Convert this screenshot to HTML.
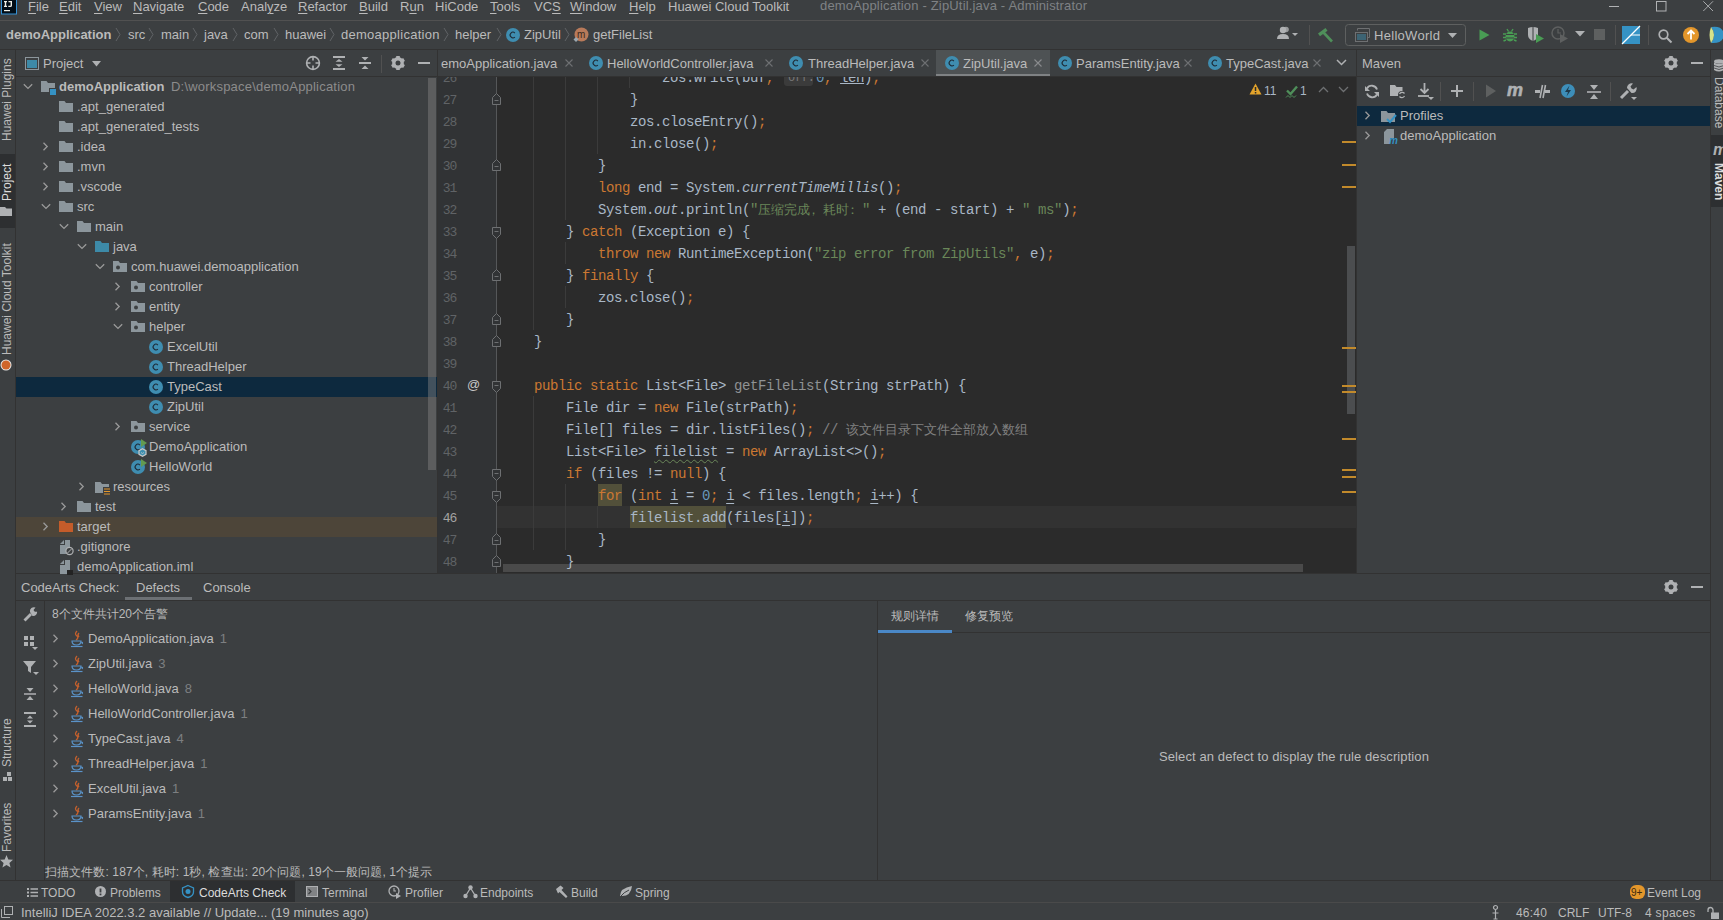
<!DOCTYPE html>
<html><head><meta charset="utf-8">
<style>
*{margin:0;padding:0;box-sizing:border-box}
html,body{width:1723px;height:920px;overflow:hidden;background:#3c3f41}
body{position:relative;font-family:"Liberation Sans",sans-serif;font-size:13px;color:#bbbbbb}
.a{position:absolute}
.t{position:absolute;white-space:pre;line-height:20px;font-size:13px;color:#bbbbbb;font-family:"Liberation Sans",sans-serif}
.code{position:absolute;white-space:pre;font-family:"Liberation Mono",monospace;font-size:14px;letter-spacing:-0.4px;line-height:22px;color:#a9b7c6}
.code i{font-style:italic}
.cj{display:inline-block;width:13px;font-size:13px;letter-spacing:0;font-family:"Liberation Sans",sans-serif;vertical-align:top}
.k{color:#cc7832}
.s{color:#6a8759}
.n{color:#6897bb}
.c{color:#808080}
.ln{position:absolute;left:436px;width:20px;text-align:right;font-family:"Liberation Mono",monospace;font-size:13px;letter-spacing:-1.2px;line-height:22px;color:#606366}
svg{position:absolute;overflow:visible}
u{text-decoration:underline;text-underline-offset:2px}
</style></head>
<body>
<div class="a" style="left:0px;top:0px;width:1723px;height:920px;background:#3c3f41;"></div>
<div class="a" style="left:0px;top:20px;width:1723px;height:1px;background:#515151;"></div>
<div class="a" style="left:0px;top:49px;width:1723px;height:1px;background:#323232;"></div>
<div class="a" style="left:15px;top:50px;width:1px;height:831px;background:#323232;"></div>
<div class="a" style="left:0px;top:154px;width:15px;height:74px;background:#2d2f31;"></div>
<div class="a" style="left:16px;top:76px;width:421px;height:1px;background:#323232;"></div>
<div class="a" style="left:437px;top:50px;width:1px;height:523px;background:#323232;"></div>
<div class="a" style="left:438px;top:76px;width:918px;height:1px;background:#323232;"></div>
<div class="a" style="left:438px;top:77px;width:59px;height:496px;background:#313335;"></div>
<div class="a" style="left:497px;top:77px;width:859px;height:496px;background:#2b2b2b;"></div>
<div class="a" style="left:1356px;top:50px;width:1px;height:523px;background:#323232;"></div>
<div class="a" style="left:1357px;top:76px;width:353px;height:1px;background:#323232;"></div>
<div class="a" style="left:1710px;top:50px;width:1px;height:831px;background:#323232;"></div>
<div class="a" style="left:1711px;top:135px;width:12px;height:72px;background:#2d2f31;"></div>
<div class="a" style="left:16px;top:573px;width:1694px;height:1px;background:#323232;"></div>
<div class="a" style="left:16px;top:600px;width:1694px;height:1px;background:#323232;"></div>
<div class="a" style="left:44px;top:601px;width:1px;height:279px;background:#323232;"></div>
<div class="a" style="left:877px;top:601px;width:1px;height:279px;background:#323232;"></div>
<div class="a" style="left:878px;top:632px;width:832px;height:1px;background:#323232;"></div>
<div class="a" style="left:0px;top:880px;width:1723px;height:1px;background:#323232;"></div>
<div class="a" style="left:0px;top:902px;width:1723px;height:1px;background:#4a4a4a;"></div>
<svg style="left:0px;top:0px" width="18" height="15" viewBox="0 0 18 15"><rect x="1.5" y="-1" width="15" height="15" fill="#020d16" stroke="#3592d6" stroke-width="1"/><path d="M4 1 H7 V2.2 H6.2 V5.8 H7 V7 H4 V5.8 H4.8 V2.2 H4z" fill="#f0f0e8"/><path d="M8.5 1 H12 V5.5 Q12 7 10.2 7 H8.3 V5.8 H10 Q10.6 5.8 10.6 5.2 V2.2 H8.5z" fill="#f0f0e8"/><rect x="4" y="10" width="6" height="1.2" fill="#f0f0e8"/></svg>
<div class="t" style="left:28px;top:-3px;font-size:13px;line-height:20px;color:#bbbbbb;font-weight:normal;"><u>F</u>ile</div>
<div class="t" style="left:59px;top:-3px;font-size:13px;line-height:20px;color:#bbbbbb;font-weight:normal;"><u>E</u>dit</div>
<div class="t" style="left:94px;top:-3px;font-size:13px;line-height:20px;color:#bbbbbb;font-weight:normal;"><u>V</u>iew</div>
<div class="t" style="left:133px;top:-3px;font-size:13px;line-height:20px;color:#bbbbbb;font-weight:normal;"><u>N</u>avigate</div>
<div class="t" style="left:198px;top:-3px;font-size:13px;line-height:20px;color:#bbbbbb;font-weight:normal;"><u>C</u>ode</div>
<div class="t" style="left:241px;top:-3px;font-size:13px;line-height:20px;color:#bbbbbb;font-weight:normal;">Anal<u>y</u>ze</div>
<div class="t" style="left:298px;top:-3px;font-size:13px;line-height:20px;color:#bbbbbb;font-weight:normal;"><u>R</u>efactor</div>
<div class="t" style="left:359px;top:-3px;font-size:13px;line-height:20px;color:#bbbbbb;font-weight:normal;"><u>B</u>uild</div>
<div class="t" style="left:400px;top:-3px;font-size:13px;line-height:20px;color:#bbbbbb;font-weight:normal;">R<u>u</u>n</div>
<div class="t" style="left:435px;top:-3px;font-size:13px;line-height:20px;color:#bbbbbb;font-weight:normal;">HiCode</div>
<div class="t" style="left:490px;top:-3px;font-size:13px;line-height:20px;color:#bbbbbb;font-weight:normal;"><u>T</u>ools</div>
<div class="t" style="left:534px;top:-3px;font-size:13px;line-height:20px;color:#bbbbbb;font-weight:normal;">VC<u>S</u></div>
<div class="t" style="left:570px;top:-3px;font-size:13px;line-height:20px;color:#bbbbbb;font-weight:normal;"><u>W</u>indow</div>
<div class="t" style="left:629px;top:-3px;font-size:13px;line-height:20px;color:#bbbbbb;font-weight:normal;"><u>H</u>elp</div>
<div class="t" style="left:668px;top:-3px;font-size:13px;line-height:20px;color:#bbbbbb;font-weight:normal;">Huawei Cloud Toolkit</div>
<div class="t" style="left:820px;top:-4px;font-size:13px;line-height:20px;color:#7f8285;font-weight:normal;letter-spacing:0.17px">demoApplication - ZipUtil.java - Administrator</div>
<div class="a" style="left:1609px;top:6px;width:10px;height:1px;background:#b0b2b4;"></div>
<svg style="left:1656px;top:1px" width="11" height="11" viewBox="0 0 11 11"><rect x="0.5" y="0.5" width="9.5" height="9.5" fill="none" stroke="#b0b2b4" stroke-width="1"/></svg>
<svg style="left:1703px;top:1px" width="11" height="11" viewBox="0 0 11 11"><path d="M0.3 0.3 L10 10 M10 0.3 L0.3 10" stroke="#a8aaac" stroke-width="1"/></svg>
<div class="t" style="left:6px;top:25px;font-size:13px;line-height:20px;color:#bbbbbb;font-weight:bold;">demoApplication</div>
<svg style="left:115px;top:27px" width="7" height="15" viewBox="0 0 7 15"><path d="M1 1 L5 7.5 L1 14" stroke="#606366" stroke-width="1" fill="none"/></svg>
<svg style="left:148px;top:27px" width="7" height="15" viewBox="0 0 7 15"><path d="M1 1 L5 7.5 L1 14" stroke="#606366" stroke-width="1" fill="none"/></svg>
<svg style="left:192px;top:27px" width="7" height="15" viewBox="0 0 7 15"><path d="M1 1 L5 7.5 L1 14" stroke="#606366" stroke-width="1" fill="none"/></svg>
<svg style="left:232px;top:27px" width="7" height="15" viewBox="0 0 7 15"><path d="M1 1 L5 7.5 L1 14" stroke="#606366" stroke-width="1" fill="none"/></svg>
<svg style="left:273px;top:27px" width="7" height="15" viewBox="0 0 7 15"><path d="M1 1 L5 7.5 L1 14" stroke="#606366" stroke-width="1" fill="none"/></svg>
<svg style="left:329px;top:27px" width="7" height="15" viewBox="0 0 7 15"><path d="M1 1 L5 7.5 L1 14" stroke="#606366" stroke-width="1" fill="none"/></svg>
<svg style="left:443px;top:27px" width="7" height="15" viewBox="0 0 7 15"><path d="M1 1 L5 7.5 L1 14" stroke="#606366" stroke-width="1" fill="none"/></svg>
<svg style="left:496px;top:27px" width="7" height="15" viewBox="0 0 7 15"><path d="M1 1 L5 7.5 L1 14" stroke="#606366" stroke-width="1" fill="none"/></svg>
<svg style="left:564px;top:27px" width="7" height="15" viewBox="0 0 7 15"><path d="M1 1 L5 7.5 L1 14" stroke="#606366" stroke-width="1" fill="none"/></svg>
<div class="t" style="left:128px;top:25px;font-size:13px;line-height:20px;color:#bbbbbb;font-weight:normal;">src</div>
<div class="t" style="left:161px;top:25px;font-size:13px;line-height:20px;color:#bbbbbb;font-weight:normal;">main</div>
<div class="t" style="left:204px;top:25px;font-size:13px;line-height:20px;color:#bbbbbb;font-weight:normal;">java</div>
<div class="t" style="left:244px;top:25px;font-size:13px;line-height:20px;color:#bbbbbb;font-weight:normal;">com</div>
<div class="t" style="left:285px;top:25px;font-size:13px;line-height:20px;color:#bbbbbb;font-weight:normal;">huawei</div>
<div class="t" style="left:341px;top:25px;font-size:13px;line-height:20px;color:#bbbbbb;font-weight:normal;letter-spacing:0.27px">demoapplication</div>
<div class="t" style="left:455px;top:25px;font-size:13px;line-height:20px;color:#bbbbbb;font-weight:normal;">helper</div>
<svg style="left:505px;top:26.5px" width="16" height="16" viewBox="0 0 16 16"><circle cx="8" cy="8" r="7" fill="#3f8db0"/><path d="M9.9 6.0 A2.8 2.8 0 1 0 9.9 10.0" stroke="#1d2a36" stroke-width="1.05" fill="none"/></svg>
<div class="t" style="left:524px;top:25px;font-size:13px;line-height:20px;color:#bbbbbb;font-weight:normal;">ZipUtil</div>
<svg style="left:574px;top:27px" width="15" height="15" viewBox="0 0 15 15"><circle cx="7.5" cy="7.5" r="7" fill="#b87a5a"/><text x="3" y="11" font-family="Liberation Sans" font-size="10" fill="#3a2a20">m</text><path d="M2 10 l2.5 2.5 l-2.5 2.5 l-2.5 -2.5z" fill="#9aa7b0"/></svg>
<div class="t" style="left:593px;top:25px;font-size:13px;line-height:20px;color:#bbbbbb;font-weight:normal;">getFileList</div>
<svg style="left:1276px;top:26px" width="22" height="16" viewBox="0 0 22 16"><circle cx="7" cy="4" r="3.2" fill="#afb1b3"/><path d="M1 13 Q1 8 7 8 Q13 8 13 13z" fill="#afb1b3"/><circle cx="10" cy="3.5" r="2.8" fill="#afb1b3" opacity="0.8"/><path d="M16 7 l3 3 l3 -3z" fill="#afb1b3"/></svg>
<div class="a" style="left:1309px;top:25px;width:1px;height:20px;background:#515151;"></div>
<svg style="left:1317px;top:27px" width="17" height="16" viewBox="0 0 17 16"><path d="M1 6.5 L8.5 1 L10.5 3.8 L3 9.3z" fill="#4f8f5a"/><path d="M6.5 5.5 L15 14.5" stroke="#4f8f5a" stroke-width="2.6"/></svg>
<svg style="left:1345px;top:24px" width="121" height="22" viewBox="0 0 121 22"><rect x="0.5" y="0.5" width="120" height="21" rx="3" fill="none" stroke="#5e6060"/><path d="M12.5 6.5 V4.5 H24.5 V13.5 H22.5" fill="none" stroke="#6e7072" stroke-width="1"/><rect x="10.5" y="8.5" width="12" height="9" fill="#3c3f41" stroke="#6e7072" stroke-width="1"/><rect x="12" y="10" width="9" height="6" fill="#3d6474"/><path d="M103 9 h9 l-4.5 5z" fill="#afb1b3"/></svg>
<div class="t" style="left:1374px;top:26px;font-size:13px;line-height:20px;color:#bbbbbb;font-weight:normal;letter-spacing:0.3px">HelloWorld</div>
<svg style="left:1479px;top:29px" width="11" height="12" viewBox="0 0 11 12"><path d="M0.5 0.5 L10.5 6 L0.5 11.5z" fill="#499c54"/></svg>
<svg style="left:1503px;top:28px" width="14" height="14" viewBox="0 0 14 14"><ellipse cx="7" cy="8.5" rx="4.5" ry="5" fill="#499c54"/><path d="M4 1 L5.5 3.5 M10 1 L8.5 3.5 M0 6 H3 M14 6 H11 M0 9.5 H3 M14 9.5 H11 M0.5 13 L3 12 M13.5 13 L11 12" stroke="#499c54" stroke-width="1.4"/><path d="M3 6.5 H11 M3 10 H11" stroke="#3c3f41" stroke-width="1"/></svg>
<svg style="left:1527px;top:25px" width="18" height="18" viewBox="0 0 18 18"><path d="M1 3 Q6 1 11 3 V10 Q11 14 6 16 Q1 14 1 10z" fill="#afb1b3"/><path d="M6 2 V16" stroke="#3c3f41" stroke-width="1"/><path d="M9 9 L17 13.5 L9 18z" fill="#499c54"/></svg>
<svg style="left:1551px;top:25px" width="18" height="18" viewBox="0 0 18 18"><circle cx="7" cy="8" r="6" fill="none" stroke="#5e6060" stroke-width="1.5"/><path d="M7 4 V8 H10" stroke="#5e6060" stroke-width="1.2" fill="none"/><path d="M9 9 L17 13.5 L9 18z" fill="#5e6060"/></svg>
<svg style="left:1575px;top:31px" width="10" height="6" viewBox="0 0 10 6"><path d="M0 0 h10 l-5 5.5z" fill="#afb1b3"/></svg>
<div class="a" style="left:1594px;top:29px;width:11px;height:11px;background:#5e6060;"></div>
<div class="a" style="left:1615px;top:25px;width:1px;height:20px;background:#515151;"></div>
<svg style="left:1622px;top:26px" width="18" height="18" viewBox="0 0 18 18"><rect x="0" y="0" width="18" height="18" fill="#3592c4"/><path d="M0 18 L18 0" stroke="#fff" stroke-width="1.2"/><path d="M9 9 H18" stroke="#fff" stroke-width="1"/></svg>
<div class="a" style="left:1648px;top:25px;width:1px;height:20px;background:#515151;"></div>
<svg style="left:1658px;top:29px" width="15" height="14" viewBox="0 0 15 14"><circle cx="5.5" cy="5.5" r="4.3" fill="none" stroke="#afb1b3" stroke-width="1.7"/><path d="M8.7 8.7 L13.5 13.5" stroke="#afb1b3" stroke-width="2"/></svg>
<svg style="left:1682px;top:26px" width="18" height="18" viewBox="0 0 18 18"><circle cx="9" cy="9" r="8" fill="#e3962b"/><path d="M9 13.5 V5 M5.5 8 L9 4.5 L12.5 8" stroke="#fff" stroke-width="1.8" fill="none"/></svg>
<svg style="left:1708px;top:25px" width="15" height="20" viewBox="0 0 15 20"><path d="M3 2 Q15 0 16 10 Q15 19 3 18 Q9 10 3 2z" fill="#3592c4"/><path d="M3 2 Q9 10 3 18 Q0 10 3 2z" fill="#d6e38a"/></svg>
<svg style="left:25px;top:57px" width="14" height="13" viewBox="0 0 14 13"><rect x="0.5" y="0.5" width="13" height="12" fill="none" stroke="#8c969c"/><rect x="2" y="3" width="10" height="8" fill="#3d8aa8"/></svg>
<div class="t" style="left:43px;top:54px;font-size:13px;line-height:20px;color:#bbbbbb;font-weight:normal;">Project</div>
<svg style="left:92px;top:61px" width="10" height="6" viewBox="0 0 10 6"><path d="M0 0 h9 l-4.5 5.5z" fill="#afb1b3"/></svg>
<svg style="left:305px;top:55px" width="16" height="16" viewBox="0 0 16 16"><circle cx="8" cy="8" r="6.4" fill="none" stroke="#afb1b3" stroke-width="1.6"/><path d="M8 2 V5.5 M8 10.5 V14 M2 8 H5.5 M10.5 8 H14" stroke="#afb1b3" stroke-width="1.6"/></svg>
<svg style="left:333px;top:55px" width="13" height="16" viewBox="0 0 13 16"><path d="M0 2 H12 M0 14 H12" stroke="#afb1b3" stroke-width="2"/><path d="M6 4 L2.5 6.8 H9.5z M6 12 L2.5 9.2 H9.5z" fill="#afb1b3"/></svg>
<svg style="left:359px;top:56px" width="13" height="15" viewBox="0 0 13 15"><path d="M0 7 H12" stroke="#afb1b3" stroke-width="2"/><path d="M6 4.5 L2.5 1 H9.5z M6 9.5 L2.5 13 H9.5z" fill="#afb1b3"/></svg>
<div class="a" style="left:381px;top:55px;width:1px;height:18px;background:#515151;"></div>
<svg style="left:391px;top:56px" width="14" height="14" viewBox="0 0 14 14"><g transform="translate(7 7)"><circle r="4.2" fill="none" stroke="#afb1b3" stroke-width="3.4"/><rect x="-1.8" y="-7" width="3.6" height="4" fill="#afb1b3" transform="rotate(0)"/><rect x="-1.8" y="-7" width="3.6" height="4" fill="#afb1b3" transform="rotate(60)"/><rect x="-1.8" y="-7" width="3.6" height="4" fill="#afb1b3" transform="rotate(120)"/><rect x="-1.8" y="-7" width="3.6" height="4" fill="#afb1b3" transform="rotate(180)"/><rect x="-1.8" y="-7" width="3.6" height="4" fill="#afb1b3" transform="rotate(240)"/><rect x="-1.8" y="-7" width="3.6" height="4" fill="#afb1b3" transform="rotate(300)"/></g></svg>
<div class="a" style="left:418px;top:62px;width:12px;height:2px;background:#afb1b3;"></div>
<div class="a" style="left:16px;top:377px;width:421px;height:20px;background:#0d293e;"></div>
<div class="a" style="left:16px;top:517px;width:421px;height:20px;background:#4d4539;"></div>
<svg style="left:23px;top:83px" width="11" height="7" viewBox="0 0 11 7"><path d="M0.8 1.2 L5 5.4 L9.2 1.2" stroke="#9a9a9a" stroke-width="1.3" fill="none"/></svg>
<svg style="left:41px;top:80px" width="16" height="15" viewBox="0 0 16 15"><path d="M0 1 h5.5 l1.5 2 h7 v9 h-14z" fill="#8c969c"/><rect x="8" y="8" width="7" height="7" fill="#3c3f41"/><rect x="9" y="9" width="6" height="6" fill="#3592c4"/></svg>
<div class="t" style="left:59px;top:77px;font-size:13px;line-height:20px;color:#bbbbbb;font-weight:bold;">demoApplication</div>
<svg style="left:59px;top:100px" width="14" height="12" viewBox="0 0 14 12"><path d="M0 1 h5.5 l1.5 2 h7 v9 h-14z" fill="#8c969c"/></svg>
<div class="t" style="left:77px;top:97px;font-size:13px;line-height:20px;color:#bbbbbb;font-weight:normal;">.apt_generated</div>
<svg style="left:59px;top:120px" width="14" height="12" viewBox="0 0 14 12"><path d="M0 1 h5.5 l1.5 2 h7 v9 h-14z" fill="#8c969c"/></svg>
<div class="t" style="left:77px;top:117px;font-size:13px;line-height:20px;color:#bbbbbb;font-weight:normal;">.apt_generated_tests</div>
<svg style="left:42px;top:142px" width="7" height="10" viewBox="0 0 7 10"><path d="M1.5 0.8 L5.2 4.5 L1.5 8.2" stroke="#9a9a9a" stroke-width="1.3" fill="none"/></svg>
<svg style="left:59px;top:140px" width="14" height="12" viewBox="0 0 14 12"><path d="M0 1 h5.5 l1.5 2 h7 v9 h-14z" fill="#8c969c"/></svg>
<div class="t" style="left:77px;top:137px;font-size:13px;line-height:20px;color:#bbbbbb;font-weight:normal;">.idea</div>
<svg style="left:42px;top:162px" width="7" height="10" viewBox="0 0 7 10"><path d="M1.5 0.8 L5.2 4.5 L1.5 8.2" stroke="#9a9a9a" stroke-width="1.3" fill="none"/></svg>
<svg style="left:59px;top:160px" width="14" height="12" viewBox="0 0 14 12"><path d="M0 1 h5.5 l1.5 2 h7 v9 h-14z" fill="#8c969c"/></svg>
<div class="t" style="left:77px;top:157px;font-size:13px;line-height:20px;color:#bbbbbb;font-weight:normal;">.mvn</div>
<svg style="left:42px;top:182px" width="7" height="10" viewBox="0 0 7 10"><path d="M1.5 0.8 L5.2 4.5 L1.5 8.2" stroke="#9a9a9a" stroke-width="1.3" fill="none"/></svg>
<svg style="left:59px;top:180px" width="14" height="12" viewBox="0 0 14 12"><path d="M0 1 h5.5 l1.5 2 h7 v9 h-14z" fill="#8c969c"/></svg>
<div class="t" style="left:77px;top:177px;font-size:13px;line-height:20px;color:#bbbbbb;font-weight:normal;">.vscode</div>
<svg style="left:41px;top:203px" width="11" height="7" viewBox="0 0 11 7"><path d="M0.8 1.2 L5 5.4 L9.2 1.2" stroke="#9a9a9a" stroke-width="1.3" fill="none"/></svg>
<svg style="left:59px;top:200px" width="14" height="12" viewBox="0 0 14 12"><path d="M0 1 h5.5 l1.5 2 h7 v9 h-14z" fill="#8c969c"/></svg>
<div class="t" style="left:77px;top:197px;font-size:13px;line-height:20px;color:#bbbbbb;font-weight:normal;">src</div>
<svg style="left:59px;top:223px" width="11" height="7" viewBox="0 0 11 7"><path d="M0.8 1.2 L5 5.4 L9.2 1.2" stroke="#9a9a9a" stroke-width="1.3" fill="none"/></svg>
<svg style="left:77px;top:220px" width="14" height="12" viewBox="0 0 14 12"><path d="M0 1 h5.5 l1.5 2 h7 v9 h-14z" fill="#8c969c"/></svg>
<div class="t" style="left:95px;top:217px;font-size:13px;line-height:20px;color:#bbbbbb;font-weight:normal;">main</div>
<svg style="left:77px;top:243px" width="11" height="7" viewBox="0 0 11 7"><path d="M0.8 1.2 L5 5.4 L9.2 1.2" stroke="#9a9a9a" stroke-width="1.3" fill="none"/></svg>
<svg style="left:95px;top:240px" width="14" height="12" viewBox="0 0 14 12"><path d="M0 1 h5.5 l1.5 2 h7 v9 h-14z" fill="#3d8aa8"/></svg>
<div class="t" style="left:113px;top:237px;font-size:13px;line-height:20px;color:#bbbbbb;font-weight:normal;">java</div>
<svg style="left:95px;top:263px" width="11" height="7" viewBox="0 0 11 7"><path d="M0.8 1.2 L5 5.4 L9.2 1.2" stroke="#9a9a9a" stroke-width="1.3" fill="none"/></svg>
<svg style="left:113px;top:260px" width="14" height="12" viewBox="0 0 14 12"><path d="M0 1 h5.5 l1.5 2 h7 v9 h-14z" fill="#8c969c"/><circle cx="5" cy="7.5" r="2" fill="#3c3f41"/></svg>
<div class="t" style="left:131px;top:257px;font-size:13px;line-height:20px;color:#bbbbbb;font-weight:normal;">com.huawei.demoapplication</div>
<svg style="left:114px;top:282px" width="7" height="10" viewBox="0 0 7 10"><path d="M1.5 0.8 L5.2 4.5 L1.5 8.2" stroke="#9a9a9a" stroke-width="1.3" fill="none"/></svg>
<svg style="left:131px;top:280px" width="14" height="12" viewBox="0 0 14 12"><path d="M0 1 h5.5 l1.5 2 h7 v9 h-14z" fill="#8c969c"/><circle cx="5" cy="7.5" r="2" fill="#3c3f41"/></svg>
<div class="t" style="left:149px;top:277px;font-size:13px;line-height:20px;color:#bbbbbb;font-weight:normal;">controller</div>
<svg style="left:114px;top:302px" width="7" height="10" viewBox="0 0 7 10"><path d="M1.5 0.8 L5.2 4.5 L1.5 8.2" stroke="#9a9a9a" stroke-width="1.3" fill="none"/></svg>
<svg style="left:131px;top:300px" width="14" height="12" viewBox="0 0 14 12"><path d="M0 1 h5.5 l1.5 2 h7 v9 h-14z" fill="#8c969c"/><circle cx="5" cy="7.5" r="2" fill="#3c3f41"/></svg>
<div class="t" style="left:149px;top:297px;font-size:13px;line-height:20px;color:#bbbbbb;font-weight:normal;">entity</div>
<svg style="left:113px;top:323px" width="11" height="7" viewBox="0 0 11 7"><path d="M0.8 1.2 L5 5.4 L9.2 1.2" stroke="#9a9a9a" stroke-width="1.3" fill="none"/></svg>
<svg style="left:131px;top:320px" width="14" height="12" viewBox="0 0 14 12"><path d="M0 1 h5.5 l1.5 2 h7 v9 h-14z" fill="#8c969c"/><circle cx="5" cy="7.5" r="2" fill="#3c3f41"/></svg>
<div class="t" style="left:149px;top:317px;font-size:13px;line-height:20px;color:#bbbbbb;font-weight:normal;">helper</div>
<svg style="left:148px;top:339px" width="16" height="16" viewBox="0 0 16 16"><circle cx="8" cy="8" r="7" fill="#3f8db0"/><path d="M9.9 6.0 A2.8 2.8 0 1 0 9.9 10.0" stroke="#1d2a36" stroke-width="1.05" fill="none"/></svg>
<div class="t" style="left:167px;top:337px;font-size:13px;line-height:20px;color:#bbbbbb;font-weight:normal;">ExcelUtil</div>
<svg style="left:148px;top:359px" width="16" height="16" viewBox="0 0 16 16"><circle cx="8" cy="8" r="7" fill="#3f8db0"/><path d="M9.9 6.0 A2.8 2.8 0 1 0 9.9 10.0" stroke="#1d2a36" stroke-width="1.05" fill="none"/></svg>
<div class="t" style="left:167px;top:357px;font-size:13px;line-height:20px;color:#bbbbbb;font-weight:normal;">ThreadHelper</div>
<svg style="left:148px;top:379px" width="16" height="16" viewBox="0 0 16 16"><circle cx="8" cy="8" r="7" fill="#3f8db0"/><path d="M9.9 6.0 A2.8 2.8 0 1 0 9.9 10.0" stroke="#1d2a36" stroke-width="1.05" fill="none"/></svg>
<div class="t" style="left:167px;top:377px;font-size:13px;line-height:20px;color:#bbbbbb;font-weight:normal;">TypeCast</div>
<svg style="left:148px;top:399px" width="16" height="16" viewBox="0 0 16 16"><circle cx="8" cy="8" r="7" fill="#3f8db0"/><path d="M9.9 6.0 A2.8 2.8 0 1 0 9.9 10.0" stroke="#1d2a36" stroke-width="1.05" fill="none"/></svg>
<div class="t" style="left:167px;top:397px;font-size:13px;line-height:20px;color:#bbbbbb;font-weight:normal;">ZipUtil</div>
<svg style="left:114px;top:422px" width="7" height="10" viewBox="0 0 7 10"><path d="M1.5 0.8 L5.2 4.5 L1.5 8.2" stroke="#9a9a9a" stroke-width="1.3" fill="none"/></svg>
<svg style="left:131px;top:420px" width="14" height="12" viewBox="0 0 14 12"><path d="M0 1 h5.5 l1.5 2 h7 v9 h-14z" fill="#8c969c"/><circle cx="5" cy="7.5" r="2" fill="#3c3f41"/></svg>
<div class="t" style="left:149px;top:417px;font-size:13px;line-height:20px;color:#bbbbbb;font-weight:normal;">service</div>
<svg style="left:130px;top:439px" width="16" height="16" viewBox="0 0 16 16"><circle cx="8" cy="8" r="7" fill="#3f8db0"/><path d="M9.9 6.0 A2.8 2.8 0 1 0 9.9 10.0" stroke="#1d2a36" stroke-width="1.05" fill="none"/></svg>
<svg style="left:140px;top:439px" width="7" height="8" viewBox="0 0 7 8"><path d="M1 0 L7 4 L1 8z" fill="#629a50"/></svg>
<svg style="left:138px;top:448px" width="9" height="9" viewBox="0 0 9 9"><path d="M4.5 0.7 L8 2.6 V6.4 L4.5 8.3 L1 6.4 V2.6z" fill="#3d8fb0" stroke="#c8c8c8" stroke-width="1.2"/><path d="M3 4.5 Q4.5 6.5 6 4.5" stroke="#c8c8c8" stroke-width="0.8" fill="none"/></svg>
<div class="t" style="left:149px;top:437px;font-size:13px;line-height:20px;color:#bbbbbb;font-weight:normal;">DemoApplication</div>
<svg style="left:130px;top:459px" width="16" height="16" viewBox="0 0 16 16"><circle cx="8" cy="8" r="7" fill="#3f8db0"/><path d="M9.9 6.0 A2.8 2.8 0 1 0 9.9 10.0" stroke="#1d2a36" stroke-width="1.05" fill="none"/></svg>
<svg style="left:140px;top:459px" width="7" height="8" viewBox="0 0 7 8"><path d="M1 0 L7 4 L1 8z" fill="#629a50"/></svg>
<div class="t" style="left:149px;top:457px;font-size:13px;line-height:20px;color:#bbbbbb;font-weight:normal;">HelloWorld</div>
<svg style="left:78px;top:482px" width="7" height="10" viewBox="0 0 7 10"><path d="M1.5 0.8 L5.2 4.5 L1.5 8.2" stroke="#9a9a9a" stroke-width="1.3" fill="none"/></svg>
<svg style="left:95px;top:481px" width="16" height="15" viewBox="0 0 16 15"><path d="M0 1 h5.5 l1.5 2 h7 v9 h-14z" fill="#8c969c"/><rect x="8" y="6" width="8" height="9" fill="#3c3f41"/><path d="M9 8 h6 M9 10.5 h6 M9 13 h6" stroke="#e3962b" stroke-width="1.2"/></svg>
<div class="t" style="left:113px;top:477px;font-size:13px;line-height:20px;color:#bbbbbb;font-weight:normal;">resources</div>
<svg style="left:60px;top:502px" width="7" height="10" viewBox="0 0 7 10"><path d="M1.5 0.8 L5.2 4.5 L1.5 8.2" stroke="#9a9a9a" stroke-width="1.3" fill="none"/></svg>
<svg style="left:77px;top:500px" width="14" height="12" viewBox="0 0 14 12"><path d="M0 1 h5.5 l1.5 2 h7 v9 h-14z" fill="#8c969c"/></svg>
<div class="t" style="left:95px;top:497px;font-size:13px;line-height:20px;color:#bbbbbb;font-weight:normal;">test</div>
<svg style="left:42px;top:522px" width="7" height="10" viewBox="0 0 7 10"><path d="M1.5 0.8 L5.2 4.5 L1.5 8.2" stroke="#9a9a9a" stroke-width="1.3" fill="none"/></svg>
<svg style="left:59px;top:520px" width="14" height="12" viewBox="0 0 14 12"><path d="M0 1 h5.5 l1.5 2 h7 v9 h-14z" fill="#c45c2a"/></svg>
<div class="t" style="left:77px;top:517px;font-size:13px;line-height:20px;color:#bbbbbb;font-weight:normal;">target</div>
<svg style="left:60px;top:540px" width="14" height="15" viewBox="0 0 14 15"><path d="M0 4 L4 0 V4z" fill="#8c969c"/><path d="M5 0 H10 V14 H0 V5 H5z" fill="#8c969c"/><circle cx="9.5" cy="11" r="3.6" fill="#3c3f41" stroke="#afb1b3" stroke-width="1.2"/><path d="M7 13.5 L12 8.5" stroke="#afb1b3" stroke-width="1"/></svg>
<div class="t" style="left:77px;top:537px;font-size:13px;line-height:20px;color:#bbbbbb;font-weight:normal;">.gitignore</div>
<svg style="left:60px;top:560px" width="14" height="15" viewBox="0 0 14 15"><path d="M0 4 L4 0 V4z" fill="#8c969c"/><path d="M5 0 H10 V14 H0 V5 H5z" fill="#8c969c"/><rect x="7" y="10" width="6" height="5" fill="#232323"/></svg>
<div class="t" style="left:77px;top:557px;font-size:13px;line-height:20px;color:#bbbbbb;font-weight:normal;">demoApplication.iml</div>
<div class="t" style="left:171px;top:77px;font-size:13px;line-height:20px;color:#8c8c8c;font-weight:normal;letter-spacing:0.2px">D:\workspace\demoApplication</div>
<div class="a" style="left:428px;top:78px;width:8px;height:392px;background:rgba(130,130,130,0.45);border-radius:0"></div>
<div class="a" style="left:497px;top:506px;width:859px;height:22px;background:#323232;"></div>
<div class="a" style="left:438px;top:506px;width:59px;height:22px;background:#313335;"></div>
<div class="a" style="left:598px;top:484px;width:24px;height:22px;background:#52503a;"></div>
<div class="a" style="left:630px;top:506px;width:96px;height:22px;background:#52503a;"></div>
<div class="a" style="left:533px;top:77px;width:1px;height:253px;background:#3b3b3b;"></div>
<div class="a" style="left:565px;top:77px;width:1px;height:143px;background:#3b3b3b;"></div>
<div class="a" style="left:597px;top:77px;width:1px;height:77px;background:#3b3b3b;"></div>
<div class="a" style="left:629px;top:77px;width:1px;height:11px;background:#3b3b3b;"></div>
<div class="a" style="left:565px;top:242px;width:1px;height:22px;background:#3b3b3b;"></div>
<div class="a" style="left:565px;top:286px;width:1px;height:22px;background:#3b3b3b;"></div>
<div class="a" style="left:533px;top:396px;width:1px;height:154px;background:#3b3b3b;"></div>
<div class="a" style="left:565px;top:484px;width:1px;height:66px;background:#3b3b3b;"></div>
<div class="a" style="left:597px;top:506px;width:1px;height:22px;background:#3b3b3b;"></div>
<div class="ln" style="top:68px;color:#606366">26</div>
<div class="code" style="left:662px;top:67px">zos.write(buf<span class="k">,</span> </div>
<div class="ln" style="top:90px;color:#606366">27</div>
<div class="code" style="left:630px;top:89px">}</div>
<div class="ln" style="top:112px;color:#606366">28</div>
<div class="code" style="left:630px;top:111px">zos.closeEntry()<span class="k">;</span></div>
<div class="ln" style="top:134px;color:#606366">29</div>
<div class="code" style="left:630px;top:133px">in.close()<span class="k">;</span></div>
<div class="ln" style="top:156px;color:#606366">30</div>
<div class="code" style="left:598px;top:155px">}</div>
<div class="ln" style="top:178px;color:#606366">31</div>
<div class="code" style="left:598px;top:177px"><span class="k">long</span> end = System.<i>currentTimeMillis</i>()<span class="k">;</span></div>
<div class="ln" style="top:200px;color:#606366">32</div>
<div class="code" style="left:598px;top:199px">System.<i>out</i>.println(<span class="s">"</span><span class="cj" style="color:#6a8759">压</span><span class="cj" style="color:#6a8759">缩</span><span class="cj" style="color:#6a8759">完</span><span class="cj" style="color:#6a8759">成</span><span class="cj" style="color:#6a8759;position:relative;left:-3px">，</span><span class="cj" style="color:#6a8759">耗</span><span class="cj" style="color:#6a8759">时</span><span class="cj" style="color:#6a8759;position:relative;left:-3px">：</span><span class="s">"</span> + (end - start) + <span class="s">" ms"</span>)<span class="k">;</span></div>
<div class="ln" style="top:222px;color:#606366">33</div>
<div class="code" style="left:566px;top:221px">} <span class="k">catch</span> (Exception e) {</div>
<div class="ln" style="top:244px;color:#606366">34</div>
<div class="code" style="left:598px;top:243px"><span class="k">throw new</span> RuntimeException(<span class="s">"zip error from ZipUtils"</span><span class="k">,</span> e)<span class="k">;</span></div>
<div class="ln" style="top:266px;color:#606366">35</div>
<div class="code" style="left:566px;top:265px">} <span class="k">finally</span> {</div>
<div class="ln" style="top:288px;color:#606366">36</div>
<div class="code" style="left:598px;top:287px">zos.close()<span class="k">;</span></div>
<div class="ln" style="top:310px;color:#606366">37</div>
<div class="code" style="left:566px;top:309px">}</div>
<div class="ln" style="top:332px;color:#606366">38</div>
<div class="code" style="left:534px;top:331px">}</div>
<div class="ln" style="top:354px;color:#606366">39</div>
<div class="ln" style="top:376px;color:#606366">40</div>
<div class="code" style="left:534px;top:375px"><span class="k">public static</span> List&lt;File&gt; <span style="color:#8f9294">getFileList</span>(String strPath) {</div>
<div class="ln" style="top:398px;color:#606366">41</div>
<div class="code" style="left:566px;top:397px">File dir = <span class="k">new</span> File(strPath)<span class="k">;</span></div>
<div class="ln" style="top:420px;color:#606366">42</div>
<div class="code" style="left:566px;top:419px">File[] files = dir.listFiles()<span class="k">;</span><span class="c"> // </span><span class="cj" style="color:#808080">该</span><span class="cj" style="color:#808080">文</span><span class="cj" style="color:#808080">件</span><span class="cj" style="color:#808080">目</span><span class="cj" style="color:#808080">录</span><span class="cj" style="color:#808080">下</span><span class="cj" style="color:#808080">文</span><span class="cj" style="color:#808080">件</span><span class="cj" style="color:#808080">全</span><span class="cj" style="color:#808080">部</span><span class="cj" style="color:#808080">放</span><span class="cj" style="color:#808080">入</span><span class="cj" style="color:#808080">数</span><span class="cj" style="color:#808080">组</span></div>
<div class="ln" style="top:442px;color:#606366">43</div>
<div class="code" style="left:566px;top:441px">List&lt;File&gt; <span style="text-decoration:underline wavy #6a8759;text-underline-offset:3px;text-decoration-thickness:1px">filelist</span> = <span class="k">new</span> ArrayList&lt;&gt;()<span class="k">;</span></div>
<div class="ln" style="top:464px;color:#606366">44</div>
<div class="code" style="left:566px;top:463px"><span class="k">if</span> (files != <span class="k">null</span>) {</div>
<div class="ln" style="top:486px;color:#606366">45</div>
<div class="code" style="left:598px;top:485px"><span class="k">for</span> (<span class="k">int</span> <span style="text-decoration:underline;text-underline-offset:3px">i</span> = <span class="n">0</span><span class="k">;</span> <span style="text-decoration:underline;text-underline-offset:3px">i</span> &lt; files.length<span class="k">;</span> <span style="text-decoration:underline;text-underline-offset:3px">i</span>++) {</div>
<div class="ln" style="top:508px;color:#a4a3a3">46</div>
<div class="code" style="left:630px;top:507px">filelist.add(files[<span style="text-decoration:underline;text-underline-offset:3px">i</span>])<span class="k">;</span></div>
<div class="ln" style="top:530px;color:#606366">47</div>
<div class="code" style="left:598px;top:529px">}</div>
<div class="ln" style="top:552px;color:#606366">48</div>
<div class="code" style="left:566px;top:551px">}</div>
<div class="a" style="left:784px;top:68px;width:29px;height:18px;background:#3b3b3b;border-radius:3px"></div>
<div class="code" style="left:788px;top:67px;font-size:12px;letter-spacing:-0.6px;color:#787878">off:</div>
<div class="code" style="left:816px;top:67px"><span class="n">0</span><span class="k">,</span> <span style="text-decoration:underline">len</span>)<span class="k">;</span></div>
<div class="a" style="left:438px;top:50px;width:918px;height:26px;background:#3c3f41;"></div>
<div class="a" style="left:438px;top:76px;width:918px;height:1px;background:#323232;"></div>
<div class="a" style="left:936px;top:50px;width:114px;height:26px;background:#4e5254;"></div>
<div class="a" style="left:936px;top:74px;width:114px;height:2px;background:#7f8284;"></div>
<div class="t" style="left:441px;top:54px;font-size:13px;line-height:20px;color:#bbbbbb;font-weight:normal;">emoApplication.java</div>
<svg style="left:565px;top:59px" width="9" height="9" viewBox="0 0 9 9"><path d="M0.5 0.5 L7.5 7.5 M7.5 0.5 L0.5 7.5" stroke="#6e7072" stroke-width="1.1"/></svg>
<svg style="left:588px;top:55px" width="16" height="16" viewBox="0 0 16 16"><circle cx="8" cy="8" r="7" fill="#3f8db0"/><path d="M9.9 6.0 A2.8 2.8 0 1 0 9.9 10.0" stroke="#1d2a36" stroke-width="1.05" fill="none"/></svg>
<div class="t" style="left:607px;top:54px;font-size:13px;line-height:20px;color:#bbbbbb;font-weight:normal;">HelloWorldController.java</div>
<svg style="left:765px;top:59px" width="9" height="9" viewBox="0 0 9 9"><path d="M0.5 0.5 L7.5 7.5 M7.5 0.5 L0.5 7.5" stroke="#6e7072" stroke-width="1.1"/></svg>
<svg style="left:788px;top:55px" width="16" height="16" viewBox="0 0 16 16"><circle cx="8" cy="8" r="7" fill="#3f8db0"/><path d="M9.9 6.0 A2.8 2.8 0 1 0 9.9 10.0" stroke="#1d2a36" stroke-width="1.05" fill="none"/></svg>
<div class="t" style="left:808px;top:54px;font-size:13px;line-height:20px;color:#bbbbbb;font-weight:normal;">ThreadHelper.java</div>
<svg style="left:921px;top:59px" width="9" height="9" viewBox="0 0 9 9"><path d="M0.5 0.5 L7.5 7.5 M7.5 0.5 L0.5 7.5" stroke="#6e7072" stroke-width="1.1"/></svg>
<svg style="left:944px;top:55px" width="16" height="16" viewBox="0 0 16 16"><circle cx="8" cy="8" r="7" fill="#3f8db0"/><path d="M9.9 6.0 A2.8 2.8 0 1 0 9.9 10.0" stroke="#1d2a36" stroke-width="1.05" fill="none"/></svg>
<div class="t" style="left:963px;top:54px;font-size:13px;line-height:20px;color:#bbbbbb;font-weight:normal;">ZipUtil.java</div>
<svg style="left:1034px;top:59px" width="9" height="9" viewBox="0 0 9 9"><path d="M0.5 0.5 L7.5 7.5 M7.5 0.5 L0.5 7.5" stroke="#8a8c8e" stroke-width="1.1"/></svg>
<svg style="left:1057px;top:55px" width="16" height="16" viewBox="0 0 16 16"><circle cx="8" cy="8" r="7" fill="#3f8db0"/><path d="M9.9 6.0 A2.8 2.8 0 1 0 9.9 10.0" stroke="#1d2a36" stroke-width="1.05" fill="none"/></svg>
<div class="t" style="left:1076px;top:54px;font-size:13px;line-height:20px;color:#bbbbbb;font-weight:normal;">ParamsEntity.java</div>
<svg style="left:1184px;top:59px" width="9" height="9" viewBox="0 0 9 9"><path d="M0.5 0.5 L7.5 7.5 M7.5 0.5 L0.5 7.5" stroke="#6e7072" stroke-width="1.1"/></svg>
<svg style="left:1207px;top:55px" width="16" height="16" viewBox="0 0 16 16"><circle cx="8" cy="8" r="7" fill="#3f8db0"/><path d="M9.9 6.0 A2.8 2.8 0 1 0 9.9 10.0" stroke="#1d2a36" stroke-width="1.05" fill="none"/></svg>
<div class="t" style="left:1226px;top:54px;font-size:13px;line-height:20px;color:#bbbbbb;font-weight:normal;">TypeCast.java</div>
<svg style="left:1313px;top:59px" width="9" height="9" viewBox="0 0 9 9"><path d="M0.5 0.5 L7.5 7.5 M7.5 0.5 L0.5 7.5" stroke="#6e7072" stroke-width="1.1"/></svg>
<svg style="left:1336px;top:59px" width="11" height="7" viewBox="0 0 11 7"><path d="M1 1 L5.5 5.5 L10 1" stroke="#afb1b3" stroke-width="1.5" fill="none"/></svg>
<div class="a" style="left:496px;top:77px;width:1px;height:496px;background:#555759;"></div>
<svg style="left:492px;top:93px" width="9" height="12" viewBox="0 0 9 12"><path d="M0.5 11.5 V4.5 L4.5 0.5 L8.5 4.5 V11.5z" fill="#313335" stroke="#6e7072" stroke-width="1"/><path d="M2.5 7.5 H6.5" stroke="#6e7072" stroke-width="1"/></svg>
<svg style="left:492px;top:159px" width="9" height="12" viewBox="0 0 9 12"><path d="M0.5 11.5 V4.5 L4.5 0.5 L8.5 4.5 V11.5z" fill="#313335" stroke="#6e7072" stroke-width="1"/><path d="M2.5 7.5 H6.5" stroke="#6e7072" stroke-width="1"/></svg>
<svg style="left:492px;top:269px" width="9" height="12" viewBox="0 0 9 12"><path d="M0.5 11.5 V4.5 L4.5 0.5 L8.5 4.5 V11.5z" fill="#313335" stroke="#6e7072" stroke-width="1"/><path d="M2.5 7.5 H6.5" stroke="#6e7072" stroke-width="1"/></svg>
<svg style="left:492px;top:313px" width="9" height="12" viewBox="0 0 9 12"><path d="M0.5 11.5 V4.5 L4.5 0.5 L8.5 4.5 V11.5z" fill="#313335" stroke="#6e7072" stroke-width="1"/><path d="M2.5 7.5 H6.5" stroke="#6e7072" stroke-width="1"/></svg>
<svg style="left:492px;top:335px" width="9" height="12" viewBox="0 0 9 12"><path d="M0.5 11.5 V4.5 L4.5 0.5 L8.5 4.5 V11.5z" fill="#313335" stroke="#6e7072" stroke-width="1"/><path d="M2.5 7.5 H6.5" stroke="#6e7072" stroke-width="1"/></svg>
<svg style="left:492px;top:533px" width="9" height="12" viewBox="0 0 9 12"><path d="M0.5 11.5 V4.5 L4.5 0.5 L8.5 4.5 V11.5z" fill="#313335" stroke="#6e7072" stroke-width="1"/><path d="M2.5 7.5 H6.5" stroke="#6e7072" stroke-width="1"/></svg>
<svg style="left:492px;top:555px" width="9" height="12" viewBox="0 0 9 12"><path d="M0.5 11.5 V4.5 L4.5 0.5 L8.5 4.5 V11.5z" fill="#313335" stroke="#6e7072" stroke-width="1"/><path d="M2.5 7.5 H6.5" stroke="#6e7072" stroke-width="1"/></svg>
<svg style="left:492px;top:227px" width="9" height="12" viewBox="0 0 9 12"><path d="M0.5 0.5 V7.5 L4.5 11.5 L8.5 7.5 V0.5z" fill="#313335" stroke="#6e7072" stroke-width="1"/><path d="M2.5 4.5 H6.5" stroke="#6e7072" stroke-width="1"/></svg>
<svg style="left:492px;top:381px" width="9" height="12" viewBox="0 0 9 12"><path d="M0.5 0.5 V7.5 L4.5 11.5 L8.5 7.5 V0.5z" fill="#313335" stroke="#6e7072" stroke-width="1"/><path d="M2.5 4.5 H6.5" stroke="#6e7072" stroke-width="1"/></svg>
<svg style="left:492px;top:469px" width="9" height="12" viewBox="0 0 9 12"><path d="M0.5 0.5 V7.5 L4.5 11.5 L8.5 7.5 V0.5z" fill="#313335" stroke="#6e7072" stroke-width="1"/><path d="M2.5 4.5 H6.5" stroke="#6e7072" stroke-width="1"/></svg>
<svg style="left:492px;top:491px" width="9" height="12" viewBox="0 0 9 12"><path d="M0.5 0.5 V7.5 L4.5 11.5 L8.5 7.5 V0.5z" fill="#313335" stroke="#6e7072" stroke-width="1"/><path d="M2.5 4.5 H6.5" stroke="#6e7072" stroke-width="1"/></svg>
<div class="t" style="left:467px;top:374px;font-size:13px;line-height:22px;color:#c8c8c8;font-weight:normal;font-family:"Liberation Sans"">@</div>
<svg style="left:1249px;top:83px" width="13" height="12" viewBox="0 0 13 12"><path d="M6.5 0.5 L12.5 11.5 H0.5z" fill="#e3a32b"/><path d="M6.5 4 V8" stroke="#2b2b2b" stroke-width="1.5"/><rect x="5.8" y="9" width="1.5" height="1.5" fill="#2b2b2b"/></svg>
<div class="t" style="left:1264px;top:81px;font-size:12px;line-height:20px;color:#a9b7c6;font-weight:normal;">11</div>
<svg style="left:1286px;top:85px" width="12" height="13" viewBox="0 0 12 13"><path d="M1 5.5 L4.5 9 L11 1.5" stroke="#4f8f5a" stroke-width="2.4" fill="none"/><path d="M0 12.5 l2 -2 l2 2 l2 -2 l2 2 l2 -2" stroke="#4f8f5a" stroke-width="1" fill="none"/></svg>
<div class="t" style="left:1300px;top:81px;font-size:12px;line-height:20px;color:#a9b7c6;font-weight:normal;">1</div>
<svg style="left:1318px;top:86px" width="11" height="7" viewBox="0 0 11 7"><path d="M1 6 L5.5 1.5 L10 6" stroke="#6e7072" stroke-width="1.3" fill="none"/></svg>
<svg style="left:1338px;top:86px" width="11" height="7" viewBox="0 0 11 7"><path d="M1 1 L5.5 5.5 L10 1" stroke="#6e7072" stroke-width="1.3" fill="none"/></svg>
<div class="a" style="left:1347px;top:246px;width:8px;height:168px;background:#4b4d4f;"></div>
<div class="a" style="left:1342px;top:141px;width:14px;height:2px;background:#c28a2b;"></div>
<div class="a" style="left:1342px;top:164px;width:14px;height:2px;background:#c28a2b;"></div>
<div class="a" style="left:1342px;top:186px;width:14px;height:2px;background:#c28a2b;"></div>
<div class="a" style="left:1342px;top:347px;width:14px;height:2px;background:#c28a2b;"></div>
<div class="a" style="left:1342px;top:385px;width:14px;height:2px;background:#c28a2b;"></div>
<div class="a" style="left:1342px;top:391px;width:14px;height:2px;background:#c28a2b;"></div>
<div class="a" style="left:1342px;top:438px;width:14px;height:2px;background:#c28a2b;"></div>
<div class="a" style="left:1342px;top:469px;width:14px;height:2px;background:#c28a2b;"></div>
<div class="a" style="left:1342px;top:476px;width:14px;height:2px;background:#c28a2b;"></div>
<div class="a" style="left:1342px;top:491px;width:14px;height:2px;background:#c28a2b;"></div>
<div class="a" style="left:503px;top:564px;width:800px;height:8px;background:rgba(255,255,255,0.15);"></div>
<div class="t" style="left:1362px;top:54px;font-size:13px;line-height:20px;color:#bbbbbb;font-weight:normal;">Maven</div>
<svg style="left:1664px;top:56px" width="14" height="14" viewBox="0 0 14 14"><g transform="translate(7 7)"><circle r="4.2" fill="none" stroke="#afb1b3" stroke-width="3.4"/><rect x="-1.8" y="-7" width="3.6" height="4" fill="#afb1b3" transform="rotate(0)"/><rect x="-1.8" y="-7" width="3.6" height="4" fill="#afb1b3" transform="rotate(60)"/><rect x="-1.8" y="-7" width="3.6" height="4" fill="#afb1b3" transform="rotate(120)"/><rect x="-1.8" y="-7" width="3.6" height="4" fill="#afb1b3" transform="rotate(180)"/><rect x="-1.8" y="-7" width="3.6" height="4" fill="#afb1b3" transform="rotate(240)"/><rect x="-1.8" y="-7" width="3.6" height="4" fill="#afb1b3" transform="rotate(300)"/></g></svg>
<div class="a" style="left:1691px;top:62px;width:12px;height:2px;background:#afb1b3;"></div>
<svg style="left:1365px;top:84px" width="14" height="15" viewBox="0 0 14 15"><path d="M12 5.5 A5.5 5.5 0 0 0 2 4.5 M2 9.5 A5.5 5.5 0 0 0 12 10.5" stroke="#afb1b3" stroke-width="1.8" fill="none"/><path d="M0 2 V7 H5z M14 13 V8 H9z" fill="#afb1b3"/></svg>
<svg style="left:1390px;top:83px" width="17" height="17" viewBox="0 0 17 17"><path d="M0 2 h5 l1.5 2 h6 v9 h-12.5z" fill="#afb1b3"/><circle cx="12" cy="12" r="4" fill="#3c3f41"/><path d="M14.5 10.5 A3 3 0 0 0 9.5 11 M9.5 13.5 A3 3 0 0 0 14.5 13" stroke="#afb1b3" stroke-width="1.3" fill="none"/></svg>
<svg style="left:1417px;top:83px" width="17" height="17" viewBox="0 0 17 17"><path d="M7.5 0 V10 M3.5 6 L7.5 10 L11.5 6" stroke="#afb1b3" stroke-width="1.8" fill="none"/><path d="M1 13 H12" stroke="#afb1b3" stroke-width="1.8"/><path d="M11 14 h6 l-3 3z" fill="#afb1b3"/></svg>
<div class="a" style="left:1440px;top:82px;width:1px;height:19px;background:#515151;"></div>
<svg style="left:1450px;top:84px" width="14" height="14" viewBox="0 0 14 14"><path d="M7 1 V13 M1 7 H13" stroke="#afb1b3" stroke-width="2"/></svg>
<div class="a" style="left:1473px;top:82px;width:1px;height:19px;background:#515151;"></div>
<svg style="left:1485px;top:84px" width="12" height="14" viewBox="0 0 12 14"><path d="M1 0.5 L11 7 L1 13.5z" fill="#5e6060"/></svg>
<svg style="left:1507px;top:85px" width="17" height="12" viewBox="0 0 17 12"><text x="0" y="11" font-family="Liberation Sans" font-weight="bold" font-style="italic" font-size="18" fill="#afb1b3" stroke="#afb1b3" stroke-width="0.6" letter-spacing="-1">m</text></svg>
<svg style="left:1535px;top:84px" width="15" height="15" viewBox="0 0 15 15"><path d="M0 7.5 H5 M10 7.5 H15" stroke="#afb1b3" stroke-width="3"/><path d="M7.5 1 L5 14 M10.5 1 L8 14" stroke="#afb1b3" stroke-width="1.6"/></svg>
<svg style="left:1560px;top:83px" width="16" height="16" viewBox="0 0 16 16"><circle cx="8" cy="8" r="7" fill="#3d8eb9"/><path d="M9.5 2.5 L5 9 H8 L6.5 13.5 L11 7 H8z" fill="#1e3a4c"/></svg>
<svg style="left:1587px;top:84px" width="14" height="16" viewBox="0 0 14 16"><path d="M0 8 H14" stroke="#afb1b3" stroke-width="1.6"/><path d="M7 6 L3 1 H11z M7 10 L3 15 H11z" fill="#afb1b3"/></svg>
<div class="a" style="left:1610px;top:82px;width:1px;height:19px;background:#515151;"></div>
<svg style="left:1619px;top:83px" width="18" height="18" viewBox="0 0 18 18"><path d="M2 15 L9 8" stroke="#afb1b3" stroke-width="3"/><path d="M8 5 A4.5 4.5 0 0 1 14 0.5 L11.5 3.5 L12.5 5.5 L14.5 6.5 L17.5 4 A4.5 4.5 0 0 1 12.5 10z" fill="#afb1b3"/><path d="M12 14 h6 l-3 3z" fill="#afb1b3"/></svg>
<div class="a" style="left:1357px;top:106px;width:353px;height:20px;background:#0d293e;"></div>
<svg style="left:1364px;top:111px" width="7" height="10" viewBox="0 0 7 10"><path d="M1.5 0.8 L5.2 4.5 L1.5 8.2" stroke="#9a9a9a" stroke-width="1.3" fill="none"/></svg>
<svg style="left:1381px;top:110px" width="16" height="15" viewBox="0 0 16 15"><path d="M0 1 h5.5 l1.5 2 h7 v9 h-14z" fill="#8c969c"/><path d="M6 9 L9 12 L15 5" stroke="#3592c4" stroke-width="2" fill="none"/></svg>
<div class="t" style="left:1400px;top:106px;font-size:13px;line-height:20px;color:#bbbbbb;font-weight:normal;">Profiles</div>
<svg style="left:1364px;top:131px" width="7" height="10" viewBox="0 0 7 10"><path d="M1.5 0.8 L5.2 4.5 L1.5 8.2" stroke="#9a9a9a" stroke-width="1.3" fill="none"/></svg>
<svg style="left:1384px;top:129px" width="15" height="16" viewBox="0 0 15 16"><path d="M3 0 H10 V9 H6 V15 H0 V3z" fill="#8c969c"/><text x="5" y="15" font-family="Liberation Sans" font-weight="bold" font-style="italic" font-size="10" fill="#3592c4">m</text></svg>
<div class="t" style="left:1400px;top:126px;font-size:13px;line-height:20px;color:#bbbbbb;font-weight:normal;">demoApplication</div>
<div class="t" style="left:0px;top:141px;font-size:12px;line-height:14px;color:#bbbbbb;font-weight:normal;transform-origin:0 0;transform:rotate(-90deg)">Huawei Plugins</div>
<div class="t" style="left:0px;top:201px;font-size:12px;line-height:14px;color:#dcdcdc;font-weight:normal;transform-origin:0 0;transform:rotate(-90deg)">Project</div>
<svg style="left:0px;top:207px" width="12" height="9" viewBox="0 0 12 9"><path d="M0 0 h5 l1.5 1.5 h5.5 v7.5 h-12z" fill="#afb1b3"/></svg>
<div class="t" style="left:0px;top:355px;font-size:12px;line-height:14px;color:#bbbbbb;font-weight:normal;transform-origin:0 0;transform:rotate(-90deg)">Huawei Cloud Toolkit</div>
<svg style="left:0px;top:359px" width="12" height="12" viewBox="0 0 12 12"><circle cx="6" cy="6" r="5.5" fill="#e8e8e8"/><circle cx="6" cy="6" r="4.5" fill="#d0652a"/></svg>
<div class="t" style="left:0px;top:767px;font-size:12px;line-height:14px;color:#bbbbbb;font-weight:normal;transform-origin:0 0;transform:rotate(-90deg)">Structure</div>
<svg style="left:3px;top:772px" width="9" height="10" viewBox="0 0 9 10"><rect x="4" y="0" width="4" height="4" fill="#afb1b3"/><rect x="0" y="5" width="4" height="4" fill="#afb1b3"/><rect x="5" y="5" width="4" height="4" fill="#afb1b3"/></svg>
<div class="t" style="left:0px;top:852px;font-size:12px;line-height:14px;color:#bbbbbb;font-weight:normal;transform-origin:0 0;transform:rotate(-90deg)">Favorites</div>
<svg style="left:0px;top:855px" width="13" height="13" viewBox="0 0 13 13"><path d="M6.5 0 L8.3 4.5 L13 4.8 L9.4 7.9 L10.6 12.6 L6.5 10 L2.4 12.6 L3.6 7.9 L0 4.8 L4.7 4.5z" fill="#afb1b3"/></svg>
<svg style="left:1714px;top:59px" width="10" height="13" viewBox="0 0 10 13"><ellipse cx="5" cy="2.5" rx="5" ry="2.2" fill="#afb1b3"/><path d="M0 3.5 V11 Q5 14 10 11 V3.5 Q5 6.5 0 3.5z" fill="#afb1b3"/><path d="M0 6.5 Q5 9.5 10 6.5 M0 9 Q5 12 10 9" stroke="#3c3f41" stroke-width="0.8" fill="none"/></svg>
<div class="t" style="left:1726px;top:77px;font-size:12px;line-height:14px;color:#bbbbbb;font-weight:normal;transform-origin:0 0;transform:rotate(90deg)">Database</div>
<div class="t" style="left:1713px;top:140px;font-size:16px;line-height:20px;color:#afb1b3;font-weight:bold;font-style:italic">m</div>
<div class="t" style="left:1726px;top:163px;font-size:12px;line-height:14px;color:#dcdcdc;font-weight:bold;transform-origin:0 0;transform:rotate(90deg)">Maven</div>
<div class="t" style="left:21px;top:578px;font-size:13px;line-height:20px;color:#bbbbbb;font-weight:normal;">CodeArts Check:</div>
<div class="t" style="left:136px;top:578px;font-size:13px;line-height:20px;color:#bbbbbb;font-weight:normal;">Defects</div>
<div class="a" style="left:125px;top:597px;width:67px;height:3px;background:#6c7074;"></div>
<div class="t" style="left:203px;top:578px;font-size:13px;line-height:20px;color:#bbbbbb;font-weight:normal;">Console</div>
<svg style="left:1664px;top:580px" width="14" height="14" viewBox="0 0 14 14"><g transform="translate(7 7)"><circle r="4.2" fill="none" stroke="#afb1b3" stroke-width="3.4"/><rect x="-1.8" y="-7" width="3.6" height="4" fill="#afb1b3" transform="rotate(0)"/><rect x="-1.8" y="-7" width="3.6" height="4" fill="#afb1b3" transform="rotate(60)"/><rect x="-1.8" y="-7" width="3.6" height="4" fill="#afb1b3" transform="rotate(120)"/><rect x="-1.8" y="-7" width="3.6" height="4" fill="#afb1b3" transform="rotate(180)"/><rect x="-1.8" y="-7" width="3.6" height="4" fill="#afb1b3" transform="rotate(240)"/><rect x="-1.8" y="-7" width="3.6" height="4" fill="#afb1b3" transform="rotate(300)"/></g></svg>
<div class="a" style="left:1691px;top:586px;width:12px;height:2px;background:#afb1b3;"></div>
<svg style="left:23px;top:607px" width="14" height="15" viewBox="0 0 14 15"><path d="M1.5 13.5 L8 7" stroke="#afb1b3" stroke-width="2.8"/><path d="M7 5 A4 4 0 0 1 12.5 0.5 L10.5 3 L11.5 4.5 L13.5 5 L14 4 A4 4 0 0 1 9.5 9z" fill="#afb1b3"/></svg>
<svg style="left:24px;top:636px" width="14" height="15" viewBox="0 0 14 15"><rect x="0" y="0" width="4" height="4" fill="#afb1b3"/><rect x="6" y="0" width="4" height="4" fill="#afb1b3"/><rect x="0" y="6" width="4" height="4" fill="#afb1b3"/><rect x="6" y="6" width="4" height="4" fill="#afb1b3"/><path d="M8 11 h6 l-3 3z" fill="#afb1b3"/></svg>
<svg style="left:23px;top:661px" width="16" height="15" viewBox="0 0 16 15"><path d="M0 0 H13 L8 6 V12 L5 10 V6z" fill="#afb1b3"/><path d="M10 11 h6 l-3 3z" fill="#afb1b3"/></svg>
<svg style="left:24px;top:687px" width="12" height="14" viewBox="0 0 12 14"><path d="M0 7 H12" stroke="#afb1b3" stroke-width="1.5"/><path d="M6 5 L2.5 1 H9.5z M6 9 L2.5 13 H9.5z" fill="#afb1b3"/></svg>
<svg style="left:24px;top:712px" width="12" height="15" viewBox="0 0 12 15"><path d="M0 1 H12 M0 14 H12" stroke="#afb1b3" stroke-width="1.8"/><path d="M6 3.5 L3 6.5 H9z M6 11.5 L3 8.5 H9z" fill="#afb1b3"/></svg>
<div class="t" style="left:52px;top:604px;font-size:12px;line-height:20px;color:#bbbbbb;font-weight:normal;">8个文件共计20个告警</div>
<svg style="left:52px;top:634px" width="7" height="10" viewBox="0 0 7 10"><path d="M1.5 0.8 L5.2 4.5 L1.5 8.2" stroke="#9a9a9a" stroke-width="1.3" fill="none"/></svg>
<svg style="left:70px;top:631px" width="14" height="17" viewBox="0 0 14 17"><path d="M7 0 Q4 3 7 5 Q9 7 6 9 M9 2 Q7 4 9 6" stroke="#c4602d" stroke-width="1.3" fill="none"/><path d="M2 10 H11 Q11 14 6.5 14 Q2 14 2 10z M11 11 Q13.5 11 12 13" stroke="#5a93c8" stroke-width="1.2" fill="none"/><path d="M1 15.5 H12.5" stroke="#5a93c8" stroke-width="1.2"/></svg>
<div class="t" style="left:88px;top:629px;font-size:13px;line-height:20px;color:#bbbbbb;font-weight:normal;">DemoApplication.java<span style="color:#7d7f81;margin-left:6px">1</span></div>
<svg style="left:52px;top:659px" width="7" height="10" viewBox="0 0 7 10"><path d="M1.5 0.8 L5.2 4.5 L1.5 8.2" stroke="#9a9a9a" stroke-width="1.3" fill="none"/></svg>
<svg style="left:70px;top:656px" width="14" height="17" viewBox="0 0 14 17"><path d="M7 0 Q4 3 7 5 Q9 7 6 9 M9 2 Q7 4 9 6" stroke="#c4602d" stroke-width="1.3" fill="none"/><path d="M2 10 H11 Q11 14 6.5 14 Q2 14 2 10z M11 11 Q13.5 11 12 13" stroke="#5a93c8" stroke-width="1.2" fill="none"/><path d="M1 15.5 H12.5" stroke="#5a93c8" stroke-width="1.2"/></svg>
<div class="t" style="left:88px;top:654px;font-size:13px;line-height:20px;color:#bbbbbb;font-weight:normal;">ZipUtil.java<span style="color:#7d7f81;margin-left:6px">3</span></div>
<svg style="left:52px;top:684px" width="7" height="10" viewBox="0 0 7 10"><path d="M1.5 0.8 L5.2 4.5 L1.5 8.2" stroke="#9a9a9a" stroke-width="1.3" fill="none"/></svg>
<svg style="left:70px;top:681px" width="14" height="17" viewBox="0 0 14 17"><path d="M7 0 Q4 3 7 5 Q9 7 6 9 M9 2 Q7 4 9 6" stroke="#c4602d" stroke-width="1.3" fill="none"/><path d="M2 10 H11 Q11 14 6.5 14 Q2 14 2 10z M11 11 Q13.5 11 12 13" stroke="#5a93c8" stroke-width="1.2" fill="none"/><path d="M1 15.5 H12.5" stroke="#5a93c8" stroke-width="1.2"/></svg>
<div class="t" style="left:88px;top:679px;font-size:13px;line-height:20px;color:#bbbbbb;font-weight:normal;">HelloWorld.java<span style="color:#7d7f81;margin-left:6px">8</span></div>
<svg style="left:52px;top:709px" width="7" height="10" viewBox="0 0 7 10"><path d="M1.5 0.8 L5.2 4.5 L1.5 8.2" stroke="#9a9a9a" stroke-width="1.3" fill="none"/></svg>
<svg style="left:70px;top:706px" width="14" height="17" viewBox="0 0 14 17"><path d="M7 0 Q4 3 7 5 Q9 7 6 9 M9 2 Q7 4 9 6" stroke="#c4602d" stroke-width="1.3" fill="none"/><path d="M2 10 H11 Q11 14 6.5 14 Q2 14 2 10z M11 11 Q13.5 11 12 13" stroke="#5a93c8" stroke-width="1.2" fill="none"/><path d="M1 15.5 H12.5" stroke="#5a93c8" stroke-width="1.2"/></svg>
<div class="t" style="left:88px;top:704px;font-size:13px;line-height:20px;color:#bbbbbb;font-weight:normal;">HelloWorldController.java<span style="color:#7d7f81;margin-left:6px">1</span></div>
<svg style="left:52px;top:734px" width="7" height="10" viewBox="0 0 7 10"><path d="M1.5 0.8 L5.2 4.5 L1.5 8.2" stroke="#9a9a9a" stroke-width="1.3" fill="none"/></svg>
<svg style="left:70px;top:731px" width="14" height="17" viewBox="0 0 14 17"><path d="M7 0 Q4 3 7 5 Q9 7 6 9 M9 2 Q7 4 9 6" stroke="#c4602d" stroke-width="1.3" fill="none"/><path d="M2 10 H11 Q11 14 6.5 14 Q2 14 2 10z M11 11 Q13.5 11 12 13" stroke="#5a93c8" stroke-width="1.2" fill="none"/><path d="M1 15.5 H12.5" stroke="#5a93c8" stroke-width="1.2"/></svg>
<div class="t" style="left:88px;top:729px;font-size:13px;line-height:20px;color:#bbbbbb;font-weight:normal;">TypeCast.java<span style="color:#7d7f81;margin-left:6px">4</span></div>
<svg style="left:52px;top:759px" width="7" height="10" viewBox="0 0 7 10"><path d="M1.5 0.8 L5.2 4.5 L1.5 8.2" stroke="#9a9a9a" stroke-width="1.3" fill="none"/></svg>
<svg style="left:70px;top:756px" width="14" height="17" viewBox="0 0 14 17"><path d="M7 0 Q4 3 7 5 Q9 7 6 9 M9 2 Q7 4 9 6" stroke="#c4602d" stroke-width="1.3" fill="none"/><path d="M2 10 H11 Q11 14 6.5 14 Q2 14 2 10z M11 11 Q13.5 11 12 13" stroke="#5a93c8" stroke-width="1.2" fill="none"/><path d="M1 15.5 H12.5" stroke="#5a93c8" stroke-width="1.2"/></svg>
<div class="t" style="left:88px;top:754px;font-size:13px;line-height:20px;color:#bbbbbb;font-weight:normal;">ThreadHelper.java<span style="color:#7d7f81;margin-left:6px">1</span></div>
<svg style="left:52px;top:784px" width="7" height="10" viewBox="0 0 7 10"><path d="M1.5 0.8 L5.2 4.5 L1.5 8.2" stroke="#9a9a9a" stroke-width="1.3" fill="none"/></svg>
<svg style="left:70px;top:781px" width="14" height="17" viewBox="0 0 14 17"><path d="M7 0 Q4 3 7 5 Q9 7 6 9 M9 2 Q7 4 9 6" stroke="#c4602d" stroke-width="1.3" fill="none"/><path d="M2 10 H11 Q11 14 6.5 14 Q2 14 2 10z M11 11 Q13.5 11 12 13" stroke="#5a93c8" stroke-width="1.2" fill="none"/><path d="M1 15.5 H12.5" stroke="#5a93c8" stroke-width="1.2"/></svg>
<div class="t" style="left:88px;top:779px;font-size:13px;line-height:20px;color:#bbbbbb;font-weight:normal;">ExcelUtil.java<span style="color:#7d7f81;margin-left:6px">1</span></div>
<svg style="left:52px;top:809px" width="7" height="10" viewBox="0 0 7 10"><path d="M1.5 0.8 L5.2 4.5 L1.5 8.2" stroke="#9a9a9a" stroke-width="1.3" fill="none"/></svg>
<svg style="left:70px;top:806px" width="14" height="17" viewBox="0 0 14 17"><path d="M7 0 Q4 3 7 5 Q9 7 6 9 M9 2 Q7 4 9 6" stroke="#c4602d" stroke-width="1.3" fill="none"/><path d="M2 10 H11 Q11 14 6.5 14 Q2 14 2 10z M11 11 Q13.5 11 12 13" stroke="#5a93c8" stroke-width="1.2" fill="none"/><path d="M1 15.5 H12.5" stroke="#5a93c8" stroke-width="1.2"/></svg>
<div class="t" style="left:88px;top:804px;font-size:13px;line-height:20px;color:#bbbbbb;font-weight:normal;">ParamsEntity.java<span style="color:#7d7f81;margin-left:6px">1</span></div>
<div class="t" style="left:45px;top:862px;font-size:12px;line-height:20px;color:#bbbbbb;font-weight:normal;letter-spacing:0.1px">扫描文件数: 187个, 耗时: 1秒, 检查出: 20个问题, 19个一般问题, 1个提示</div>
<div class="t" style="left:891px;top:606px;font-size:12px;line-height:20px;color:#bbbbbb;font-weight:normal;">规则详情</div>
<div class="a" style="left:878px;top:630px;width:74px;height:3px;background:#4a88c7;"></div>
<div class="t" style="left:965px;top:606px;font-size:12px;line-height:20px;color:#bbbbbb;font-weight:normal;">修复预览</div>
<div class="t" style="left:1159px;top:747px;font-size:13px;line-height:20px;color:#bbbbbb;font-weight:normal;letter-spacing:0.1px">Select an defect to display the rule description</div>
<svg style="left:27px;top:888px" width="11" height="9" viewBox="0 0 11 9"><rect x="0" y="0" width="2" height="2" fill="#afb1b3"/><rect x="0" y="3.5" width="2" height="2" fill="#afb1b3"/><rect x="0" y="7" width="2" height="2" fill="#afb1b3"/><path d="M3.5 1 H11 M3.5 4.5 H11 M3.5 8 H11" stroke="#afb1b3" stroke-width="1.5"/></svg>
<div class="t" style="left:41px;top:883px;font-size:12px;line-height:20px;color:#bbbbbb;font-weight:normal;">TODO</div>
<svg style="left:95px;top:886px" width="11" height="11" viewBox="0 0 11 11"><circle cx="5.5" cy="5.5" r="5.5" fill="#afb1b3"/><path d="M5.5 2.5 V6.5" stroke="#3c3f41" stroke-width="1.8"/><rect x="4.6" y="7.5" width="1.8" height="1.8" fill="#3c3f41"/></svg>
<div class="t" style="left:110px;top:883px;font-size:12px;line-height:20px;color:#bbbbbb;font-weight:normal;">Problems</div>
<div class="a" style="left:170px;top:881px;width:125px;height:21px;background:#2d2f31;"></div>
<svg style="left:182px;top:885px" width="12" height="13" viewBox="0 0 12 13"><path d="M6 0.5 L11.5 3 V7 Q11.5 11 6 12.5 Q0.5 11 0.5 7 V3z" fill="none" stroke="#3592c4" stroke-width="1.3"/><circle cx="6" cy="6.5" r="2.5" fill="#3592c4"/></svg>
<div class="t" style="left:199px;top:883px;font-size:12px;line-height:20px;color:#dcdcdc;font-weight:normal;">CodeArts Check</div>
<svg style="left:306px;top:886px" width="12" height="11" viewBox="0 0 12 11"><rect x="0.5" y="0.5" width="11" height="10" fill="none" stroke="#afb1b3"/><rect x="0.5" y="0.5" width="11" height="10" fill="#afb1b3" opacity="0.6"/><path d="M2.5 3 L5 5.5 L2.5 8" stroke="#3c3f41" stroke-width="1.2" fill="none"/></svg>
<div class="t" style="left:322px;top:883px;font-size:12px;line-height:20px;color:#bbbbbb;font-weight:normal;">Terminal</div>
<svg style="left:388px;top:885px" width="14" height="14" viewBox="0 0 14 14"><circle cx="6" cy="6" r="5" fill="none" stroke="#afb1b3" stroke-width="1.3"/><path d="M6 3 V6 H8" stroke="#afb1b3" stroke-width="1.1" fill="none"/><path d="M8 8 L13 11 L8 14z" fill="#afb1b3"/></svg>
<div class="t" style="left:405px;top:883px;font-size:12px;line-height:20px;color:#bbbbbb;font-weight:normal;">Profiler</div>
<svg style="left:463px;top:885px" width="15" height="14" viewBox="0 0 15 14"><circle cx="7.5" cy="2.5" r="2.2" fill="#afb1b3"/><circle cx="2.5" cy="11" r="2.2" fill="#afb1b3"/><circle cx="12.5" cy="11" r="2.2" fill="#afb1b3"/><path d="M7.5 3 L2.5 11 M7.5 3 L12.5 11" stroke="#afb1b3" stroke-width="1.3"/></svg>
<div class="t" style="left:480px;top:883px;font-size:12px;line-height:20px;color:#bbbbbb;font-weight:normal;">Endpoints</div>
<svg style="left:555px;top:885px" width="14" height="13" viewBox="0 0 14 13"><path d="M1 4 L5.5 0.5 L8.5 3 L6.5 5 L12.5 11.5 L11 13 L4.5 7 L3 8.5z" fill="#afb1b3"/></svg>
<div class="t" style="left:571px;top:883px;font-size:12px;line-height:20px;color:#bbbbbb;font-weight:normal;">Build</div>
<svg style="left:619px;top:886px" width="14" height="11" viewBox="0 0 14 11"><path d="M1 10 Q1 2 13 0 Q12 10 3 10z" fill="#afb1b3"/><path d="M1 11 Q5 6 10 4" stroke="#3c3f41" stroke-width="1" fill="none"/></svg>
<div class="t" style="left:635px;top:883px;font-size:12px;line-height:20px;color:#bbbbbb;font-weight:normal;">Spring</div>
<svg style="left:1630px;top:885px" width="15" height="14" viewBox="0 0 15 14"><rect x="0" y="0" width="15" height="14" rx="6" fill="#e3962b"/><text x="1" y="11" font-family="Liberation Sans" font-size="10" fill="#3c2a10">9+</text></svg>
<div class="t" style="left:1647px;top:883px;font-size:12px;line-height:20px;color:#bbbbbb;font-weight:normal;">Event Log</div>
<svg style="left:1px;top:906px" width="12" height="12" viewBox="0 0 12 12"><rect x="3.5" y="0.5" width="8" height="8" fill="none" stroke="#afb1b3"/><path d="M0.5 3 V11.5 H9" stroke="#afb1b3" fill="none"/></svg>
<div class="t" style="left:21px;top:903px;font-size:13px;line-height:20px;color:#bbbbbb;font-weight:normal;">IntelliJ IDEA 2022.3.2 available // Update... (19 minutes ago)</div>
<svg style="left:1491px;top:905px" width="9" height="15" viewBox="0 0 9 15"><circle cx="4.5" cy="2.5" r="2" fill="none" stroke="#afb1b3" stroke-width="1.2"/><path d="M4.5 5 V14 M1.5 8 H7.5 M2.5 14 H6.5" stroke="#afb1b3" stroke-width="1.2"/></svg>
<div class="t" style="left:1516px;top:903px;font-size:12px;line-height:20px;color:#bbbbbb;font-weight:normal;letter-spacing:0.2px">46:40</div>
<div class="t" style="left:1558px;top:903px;font-size:12px;line-height:20px;color:#bbbbbb;font-weight:normal;">CRLF</div>
<div class="t" style="left:1598px;top:903px;font-size:12px;line-height:20px;color:#bbbbbb;font-weight:normal;">UTF-8</div>
<div class="t" style="left:1645px;top:903px;font-size:12px;line-height:20px;color:#bbbbbb;font-weight:normal;letter-spacing:0.3px">4 spaces</div>
<svg style="left:1707px;top:907px" width="12" height="12" viewBox="0 0 12 12"><rect x="4" y="5.5" width="8" height="6.5" fill="#afb1b3"/><path d="M1 5 V3 A2.5 2.5 0 0 1 6 3 V6" stroke="#afb1b3" stroke-width="1.3" fill="none"/></svg>
</body></html>
